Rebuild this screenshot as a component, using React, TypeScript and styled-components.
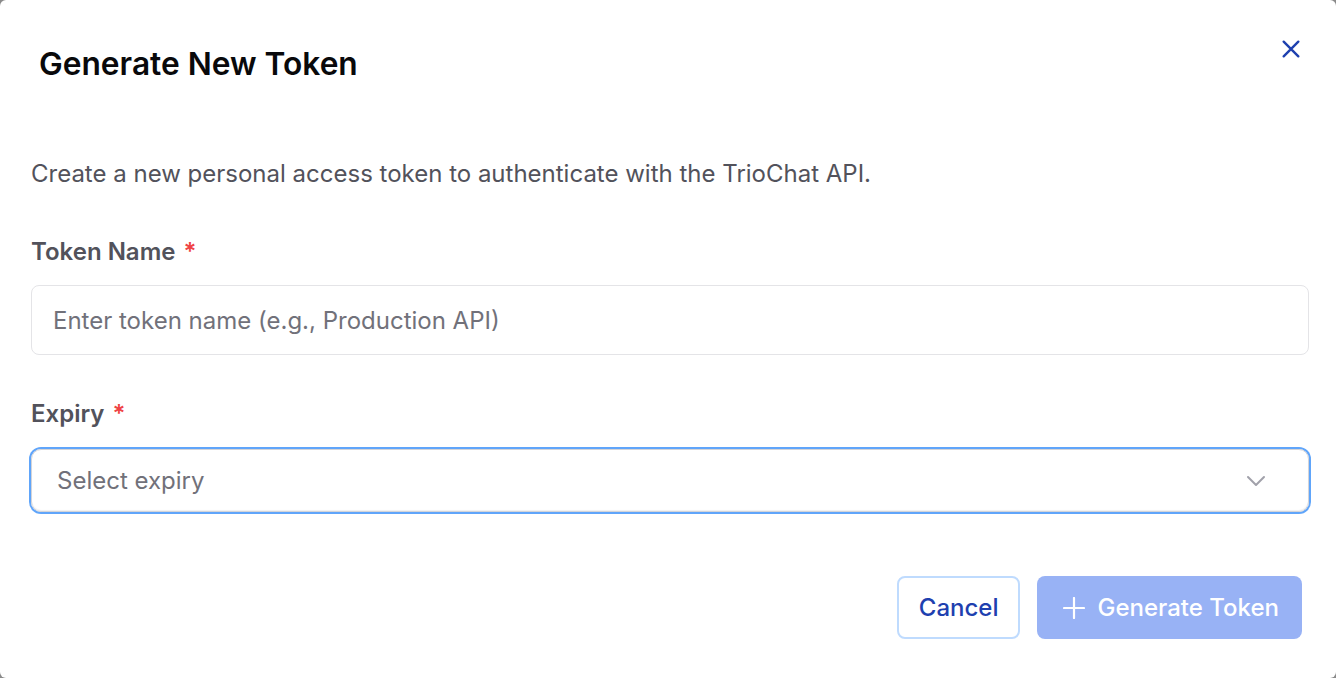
import React from "react";
import styled, { createGlobalStyle } from "styled-components";

const GlobalStyle = createGlobalStyle`
  html, body {
    margin: 0;
    padding: 0;
    background: #8a8a8a;
  }
  body {
    font-family: Inter, "Noto Sans", sans-serif;
  }
  * {
    box-sizing: border-box;
  }
`;

const Dialog = styled.div`
  width: 1336px;
  height: 678px;
  background: #ffffff;
  border-radius: 6px;
  padding: 45px 27px 0 31px;
  display: flex;
  flex-direction: column;
`;

const Header = styled.div`
  display: flex;
  align-items: flex-start;
  justify-content: space-between;
  padding-left: 8px;
`;

const Title = styled.h2`
  margin: 0;
  font-size: 31.7px;
  line-height: 38px;
  font-weight: 600;
  color: #09090b;
`;

const CloseButton = styled.button`
  border: none;
  background: none;
  padding: 0;
  margin: -10px 4px 0 0;
  width: 28px;
  height: 28px;
  display: flex;
  align-items: center;
  justify-content: center;
  color: #1e40af;
  cursor: pointer;
`;

const Description = styled.p`
  margin: 75px 0 0;
  font-size: 24px;
  line-height: 32px;
  color: #52525b;
`;

const Label = styled.label<{ top: number }>`
  display: block;
  margin-top: ${(p) => p.top}px;
  font-size: 24px;
  line-height: 32px;
  font-weight: 600;
  color: #52525b;
`;

const Required = styled.span`
  color: #ef4444;
  margin-left: 8px;
`;

const TextInput = styled.input`
  display: block;
  width: 100%;
  height: 70px;
  margin-top: 17px;
  padding: 0 21px;
  border: 1.5px solid #e4e4e7;
  border-radius: 8px;
  font-family: inherit;
  font-size: 24px;
  color: #18181b;
  outline: none;
  &::placeholder {
    color: #71717a;
  }
`;

const SelectBox = styled.div`
  display: flex;
  align-items: center;
  justify-content: space-between;
  height: 63px;
  margin-top: 19px;
  padding: 0 42px 0 25px;
  border: 1.5px solid #d4d4d8;
  border-radius: 10px;
  box-shadow: 0 0 0 2px #60a5fa, inset 0 -1px 1px rgba(0, 0, 0, 0.06);
  font-size: 24px;
  color: #71717a;
`;

const Footer = styled.div`
  display: flex;
  justify-content: flex-end;
  gap: 17px;
  margin-top: 64px;
  padding-right: 7px;
`;

const Button = styled.button<{ primary?: boolean }>`
  display: flex;
  align-items: center;
  gap: 12px;
  height: 63px;
  padding: ${(p) => (p.primary ? "0 21px 0 24px" : "0 20px")};
  border-radius: 8px;
  border: 2px solid ${(p) => (p.primary ? "transparent" : "#bfdbfe")};
  background: ${(p) => (p.primary ? "#98b2f5" : "#ffffff")};
  color: ${(p) => (p.primary ? "#ffffff" : "#1e40af")};
  font-family: inherit;
  font-size: 24px;
  font-weight: 500;
  cursor: pointer;
`;

export default function App() {
  return (
    <>
      <GlobalStyle />
      <Dialog>
        <Header>
          <Title>Generate New Token</Title>
          <CloseButton aria-label="Close">
            <svg width="22" height="22" viewBox="0 0 24 24" fill="none" stroke="currentColor" strokeWidth="2.6" strokeLinecap="round">
              <path d="M4 4L20 20M20 4L4 20" />
            </svg>
          </CloseButton>
        </Header>
        <Description>
          Create a new personal access token to authenticate with the TrioChat API.
        </Description>
        <Label top={46}>
          Token Name<Required>*</Required>
        </Label>
        <TextInput placeholder="Enter token name (e.g., Production API)" />
        <Label top={43}>
          Expiry<Required>*</Required>
        </Label>
        <SelectBox>
          <span>Select expiry</span>
          <svg width="20" height="12" viewBox="0 0 20 12" fill="none" stroke="#a1a1aa" strokeWidth="2" strokeLinecap="round" strokeLinejoin="round">
            <path d="M2 2L10 10L18 2" />
          </svg>
        </SelectBox>
        <Footer>
          <Button>Cancel</Button>
          <Button primary>
            <svg width="22" height="22" viewBox="0 0 22 22" fill="none" stroke="currentColor" strokeWidth="2.2" strokeLinecap="round">
              <path d="M11 1V21M1 11H21" />
            </svg>
            Generate Token
          </Button>
        </Footer>
      </Dialog>
    </>
  );
}
